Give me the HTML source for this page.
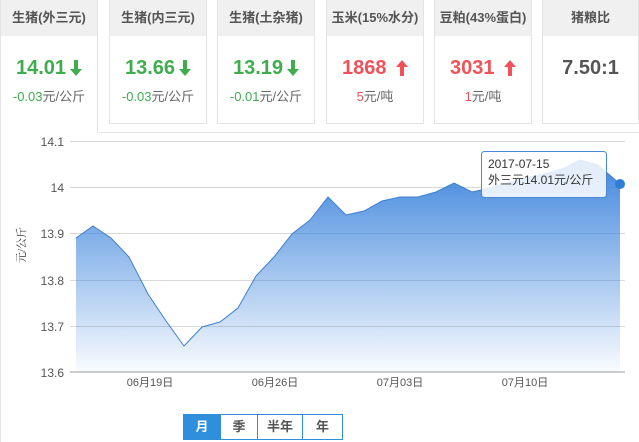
<!DOCTYPE html><html><head><meta charset="utf-8"><style>
*{margin:0;padding:0;box-sizing:border-box}
body{width:639px;height:442px;background:#fff;font-family:"Liberation Sans","Noto Sans CJK SC",sans-serif;position:relative;overflow:hidden}
.c{position:absolute;top:0;width:98px;height:124px;border:1px solid #e3e3e3;border-top:none;background:#fff;text-align:center}
.c .h{height:36px;background:#f0f0f0;line-height:36px;font-size:13px;font-weight:bold;color:#555}
.c .v{margin-top:20px;font-size:20px;font-weight:bold;line-height:24px}
.c .v svg{vertical-align:-2px;margin-left:4px}
.c .s{font-size:13px;color:#666;margin-top:6px}
.g{color:#3fad4e}.r{color:#f0525a}
.btns{position:absolute;left:183px;top:414px;height:26px;border:1px solid #2f8fdc;display:flex;font-size:13px;font-weight:bold;color:#555}
.btns div{line-height:24px;text-align:center;border-left:1px solid #2f8fdc}
</style></head><body>
<div style="position:absolute;left:99px;top:132px;width:540px;border-top:1px solid #e3e3e3"></div>
<div style="position:absolute;left:0;top:0;width:1px;height:442px;background:#e3e3e3"></div>
<div class="c" style="left:0;height:133px;border-bottom:none"><div class="h">生猪(外三元)</div><div class="v g">14.01<svg width="12" height="16" viewBox="0 0 12 16"><path d="M4 0h4v9h4L6 16 0 9h4z" fill="#3fad4e"/></svg></div><div class="s"><span class="g">-0.03</span>元/公斤</div></div>
<div class="c" style="left:109px"><div class="h">生猪(内三元)</div><div class="v g">13.66<svg width="12" height="16" viewBox="0 0 12 16"><path d="M4 0h4v9h4L6 16 0 9h4z" fill="#3fad4e"/></svg></div><div class="s"><span class="g">-0.03</span>元/公斤</div></div>
<div class="c" style="left:217px"><div class="h">生猪(土杂猪)</div><div class="v g">13.19<svg width="12" height="16" viewBox="0 0 12 16"><path d="M4 0h4v9h4L6 16 0 9h4z" fill="#3fad4e"/></svg></div><div class="s"><span class="g">-0.01</span>元/公斤</div></div>
<div class="c" style="left:326px"><div class="h">玉米(15%水分)</div><div class="v r">1868 <svg width="12" height="16" viewBox="0 0 12 16"><path d="M4 16h4V7h4L6 0 0 7h4z" fill="#f0525a"/></svg></div><div class="s"><span class="r">5</span>元/吨</div></div>
<div class="c" style="left:434px"><div class="h">豆粕(43%蛋白)</div><div class="v r">3031 <svg width="12" height="16" viewBox="0 0 12 16"><path d="M4 16h4V7h4L6 0 0 7h4z" fill="#f0525a"/></svg></div><div class="s"><span class="r">1</span>元/吨</div></div>
<div class="c" style="left:542px;width:97px"><div class="h">猪粮比</div><div class="v" style="color:#555">7.50:1</div></div>
<svg style="position:absolute;left:0;top:0" width="639" height="442">
<defs><linearGradient id="gr" x1="0" y1="0" x2="0" y2="1"><stop offset="0" stop-color="#3f86dc"/><stop offset="1" stop-color="#3f86dc" stop-opacity="0.03"/></linearGradient></defs>
<g stroke="#d8d8d8" stroke-width="1">
<line x1="70" y1="141.5" x2="625" y2="141.5"/><line x1="70" y1="187.5" x2="625" y2="187.5"/><line x1="70" y1="233.5" x2="625" y2="233.5"/><line x1="70" y1="280.5" x2="625" y2="280.5"/><line x1="70" y1="326.5" x2="625" y2="326.5"/></g>
<line x1="70" y1="372" x2="625" y2="372" stroke="#ccc" stroke-width="2"/>
<path d="M76,372 L76,238 93,226 111,238 129,257 148,294 166,321 184,346 202,327 220,322 238,308 256,276 274,257 292,234 310,220 328,197 346,215 364,211 382,201 400,197 418,197 436,192 454,183 472,192 490,188 508,183 526,178 544,174 562,169 580,160 598,165 620,184 L620,372 Z" fill="url(#gr)" stroke="none"/>
<path d="M76,238 93,226 111,238 129,257 148,294 166,321 184,346 202,327 220,322 238,308 256,276 274,257 292,234 310,220 328,197 346,215 364,211 382,201 400,197 418,197 436,192 454,183 472,192 490,188 508,183 526,178 544,174 562,169 580,160 598,165 620,184" fill="none" stroke="#3f7fd0" stroke-width="1"/>
<circle cx="620" cy="184" r="5" fill="#2f7fd6"/>
<g font-size="12" fill="#555" font-family="Liberation Sans,sans-serif" text-anchor="end">
<text x="64" y="146">14.1</text><text x="64" y="192">14</text><text x="64" y="238">13.9</text><text x="64" y="285">13.8</text><text x="64" y="331">13.7</text><text x="64" y="377">13.6</text></g>
<g font-size="11" fill="#555" font-family="Liberation Sans,Noto Sans CJK SC,sans-serif" text-anchor="middle">
<text x="150" y="386">06月19日</text><text x="275" y="386">06月26日</text><text x="400" y="386">07月03日</text><text x="525" y="386">07月10日</text></g>
<text transform="translate(25,245) rotate(-90)" font-size="11" fill="#333" text-anchor="middle" font-family="Liberation Serif,Noto Serif CJK SC,serif">元/公斤</text>
<rect x="481.5" y="151.5" width="125" height="46" rx="3" fill="#fff" fill-opacity="0.85" stroke="#4a88d6"/>
<g font-size="12" fill="#333" font-family="Liberation Sans,Noto Sans CJK SC,sans-serif"><text x="488" y="168">2017-07-15</text><text x="488" y="184">外三元14.01元/公斤</text></g>
</svg>
<div class="btns"><div style="width:36px;border:none;background:#2f8fdc;color:#fff">月</div><div style="width:37px">季</div><div style="width:45px">半年</div><div style="width:40px">年</div></div>
</body></html>
